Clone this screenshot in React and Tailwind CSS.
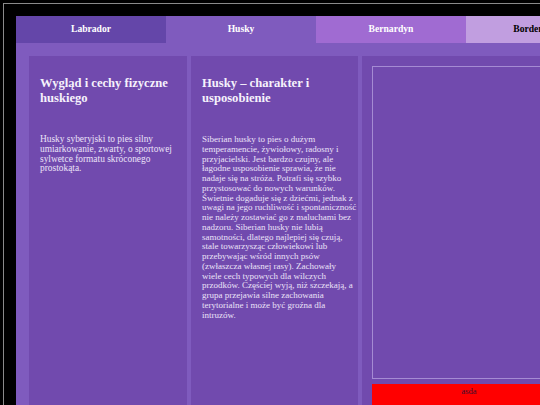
const tabs = [
  { name: 'Labrador', cls: 'bg-[#6446a9] text-white' },
  { name: 'Husky', cls: 'bg-[#7f5bbe] text-white' },
  { name: 'Bernardyn', cls: 'bg-[#a06bd2] text-white' },
  { name: 'Border Collie', cls: 'bg-[#c19ee0] text-black' },
];

// podział linii jak w oryginale
const huskyLines = [
  'Siberian husky to pies o dużym',
  'temperamencie, żywiołowy, radosny i',
  'przyjacielski. Jest bardzo czujny, ale',
  'łagodne usposobienie sprawia, że nie',
  'nadaje się na stróża. Potrafi się szybko',
  'przystosować do nowych warunków.',
  'Świetnie dogaduje się z dziećmi, jednak z',
  'uwagi na jego ruchliwość i spontaniczność',
  'nie należy zostawiać go z maluchami bez',
  'nadzoru. Siberian husky nie lubią',
  'samotności, dlatego najlepiej się czują,',
  'stale towarzysząc człowiekowi lub',
  'przebywając wśród innych psów',
  '(zwłaszcza własnej rasy). Zachowały',
  'wiele cech typowych dla wilczych',
  'przodków. Częściej wyją, niż szczekają, a',
  'grupa przejawia silne zachowania',
  'terytorialne i może być groźna dla',
  'intruzów.',
];

const Card = ({ width, title, children, textCls }) => (
  <div className={`${width} shrink-0 bg-[#714aae] pl-[11px] pr-[9px] pt-[20px]`}>
    <h2 className="text-[12.6px] leading-[15px] font-bold text-[#f6f2fc]">{title}</h2>
    <p className={`mt-[29px] leading-[9.75px] text-[#ebe2f8] ${textCls}`}>{children}</p>
  </div>
);

export default function App() {
  return (
    <div className="h-[405px] w-[540px] overflow-hidden bg-black pl-[3px] pt-[3px] font-['Liberation_Serif',serif]">
      <div className="h-full w-[700px] border-l border-t border-[#8a8a8a] pl-[12px] pt-[12px]">
        <div className="flex h-[27px]">
          {tabs.map((t) => (
            <div
              key={t.name}
              className={`flex w-[150px] shrink-0 items-center justify-center text-[9.6px] font-bold ${t.cls}`}
            >
              {t.name}
            </div>
          ))}
        </div>
        <div className="flex h-[400px] gap-[4px] bg-[#7f5bbe] pl-[13px] pt-[13px]">
          <Card width="w-[158px]" textCls="text-[9.4px]" title="Wygląd i cechy fizyczne huskiego">
            Husky syberyjski to pies silny umiarkowanie, zwarty, o sportowej sylwetce formatu skróconego prostokąta.
          </Card>
          <Card width="w-[167px]" textCls="text-[9px] whitespace-nowrap" title="Husky – charakter i usposobienie">
            {huskyLines.map((line, i) => (
              <span key={i}>
                {line}
                {i < huskyLines.length - 1 && <br />}
              </span>
            ))}
          </Card>
          <div className="flex w-[214px] shrink-0 flex-col gap-[5px] bg-[#714aae] p-[10px]">
            <div className="h-[313px] border border-[#a58bd3]" />
            <div className="h-[40px] bg-[#ff0000] pt-[1px] text-center text-[8.5px] text-[#3a1030]">asda</div>
          </div>
        </div>
      </div>
    </div>
  );
}
